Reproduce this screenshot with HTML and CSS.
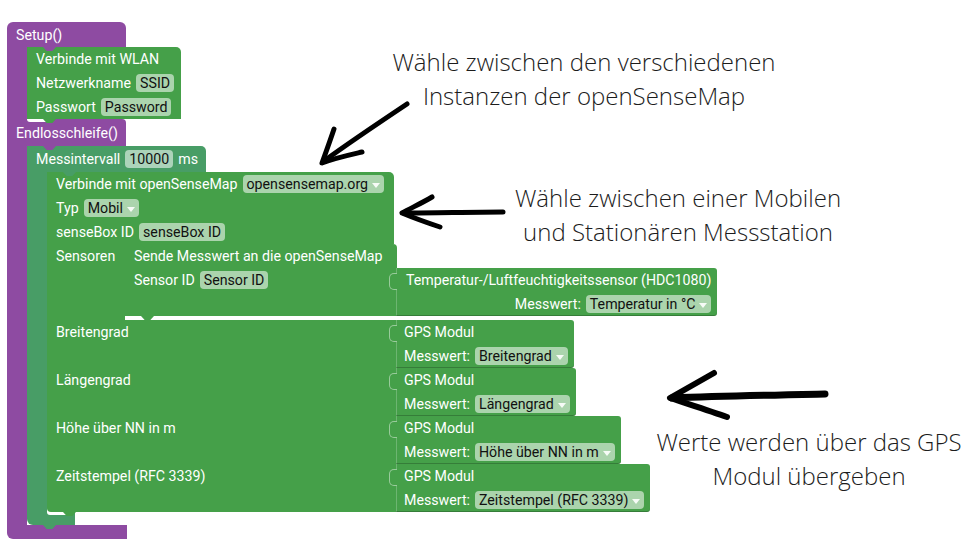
FILE: index.html
```html
<!DOCTYPE html>
<html lang="de">
<head>
<meta charset="utf-8">
<title>senseBox Blockly</title>
<link rel="stylesheet" href="styles.css">
</head>
<body>
<div class="canvas">
  <div class="program">
    <div class="c-head purple setup-head">Setup()</div>
    <div class="c-body">
      <div class="spine purple"></div>
      <div class="block green wlan notch-purple tab">
        <div class="row">Verbinde mit WLAN</div>
        <div class="row">Netzwerkname <span class="pill">SSID</span></div>
        <div class="row">Passwort <span class="pill">Password</span></div>
      </div>
    </div>
    <div class="c-head purple loop-head inner-corner">Endlosschleife()</div>
    <div class="c-body">
      <div class="spine purple"></div>
      <div class="interval">
        <div class="c-head teal interval-head notch-purple">Messintervall <span class="pill">10000</span> ms</div>
        <div class="c-body">
          <div class="spine teal"></div>
          <div class="block osm notch-teal tab">
            <div class="row green osm-row osm-top">Verbinde mit openSenseMap <span class="pill drop">opensensemap.org</span></div>
            <div class="row green osm-row">Typ <span class="pill drop">Mobil</span></div>
            <div class="row green osm-row">senseBox ID <span class="pill">senseBox ID</span></div>
            <div class="sensor-row">
              <div class="label-cell green sensor-label">Sensoren</div>
              <div class="stmt-well">
                <div class="block green send notch-green tab">
                  <div class="row">Sende Messwert an die openSenseMap</div>
                  <div class="send-value">
                    <div class="row send-label">Sensor ID <span class="pill">Sensor ID</span></div>
                    <div class="value-block green temp">
                      <div class="row title">Temperatur-/Luftfeuchtigkeitssensor (HDC1080)</div>
                      <div class="row right">Messwert: <span class="pill drop">Temperatur in °C</span></div>
                    </div>
                  </div>
                </div>
              </div>
            </div>
            <div class="input-row">
              <div class="label-cell green gps-label">Breitengrad</div>
              <div class="value-block green gps">
                <div class="row title">GPS Modul</div>
                <div class="row">Messwert: <span class="pill drop">Breitengrad</span></div>
              </div>
            </div>
            <div class="input-row">
              <div class="label-cell green gps-label">Längengrad</div>
              <div class="value-block green gps">
                <div class="row title">GPS Modul</div>
                <div class="row">Messwert: <span class="pill drop">Längengrad</span></div>
              </div>
            </div>
            <div class="input-row">
              <div class="label-cell green gps-label">Höhe über NN in m</div>
              <div class="value-block green gps">
                <div class="row title">GPS Modul</div>
                <div class="row">Messwert: <span class="pill drop">Höhe über NN in m</span></div>
              </div>
            </div>
            <div class="input-row">
              <div class="label-cell green gps-label osm-bottom">Zeitstempel (RFC 3339)</div>
              <div class="value-block green gps">
                <div class="row title">GPS Modul</div>
                <div class="row">Messwert: <span class="pill drop">Zeitstempel (RFC 3339)</span></div>
              </div>
            </div>
          </div>
        </div>
        <div class="c-foot teal interval-foot inner-corner tab-teal"></div>
      </div>
    </div>
    <div class="c-foot purple setup-foot"></div>
  </div>

  <div class="note note1">Wähle zwischen den verschiedenen<br>Instanzen der openSenseMap</div>
  <div class="note note2">Wähle zwischen einer Mobilen<br>und Stationären Messstation</div>
  <div class="note note3">Werte werden über das GPS<br>Modul übergeben</div>

  <svg class="arrows" width="967" height="553" viewBox="0 0 967 553" aria-hidden="true">
    <g fill="none" stroke="#000" stroke-linecap="round" stroke-linejoin="round">
      <path d="M407 104 C380 122 350 142 324 161" stroke-width="5"/>
      <path d="M334 129 C330 141 326 152 322 163 C335 158 349 155 362 152" stroke-width="5"/>
      <path d="M503 212 C470 212 436 213 404 213" stroke-width="5"/>
      <path d="M432 197 C422 203 411 208 402 213 C414 218 428 223 440 227" stroke-width="5"/>
      <path d="M825 394 C775 395 722 396 672 398" stroke-width="7"/>
      <path d="M714 373 C700 381 684 390 670 398 C688 404 710 411 727 417" stroke-width="6"/>
    </g>
  </svg>
</div>
</body>
</html>
```

FILE: styles.css
```css
* {
  box-sizing: border-box;
}

html,
body {
  margin: 0;
  padding: 0;
  background: #ffffff;
}

.canvas {
  position: relative;
  width: 967px;
  height: 553px;
  overflow: hidden;
  background: #ffffff;
  font-family: Roboto, "Liberation Sans", Arial, sans-serif;
  font-size: 14.2px;
  color: #ffffff;
}

/* ---------- colours ---------- */
.purple { background: #8e4ba2; }
.teal { background: #489d66; }
.green { background: #45a049; }

/* ---------- program on the workspace ---------- */
.program {
  position: absolute;
  left: 7px;
  top: 22px;
}

.row {
  height: 24px;
  display: flex;
  align-items: center;
  gap: 5px;
  padding-left: 9px;
  white-space: nowrap;
}

.c-head {
  position: relative;
  height: 24px;
  display: flex;
  align-items: center;
  gap: 5px;
  padding-left: 9px;
  white-space: nowrap;
}

.c-body {
  display: flex;
}

.spine {
  width: 20px;
  flex-shrink: 0;
}

.c-foot {
  position: relative;
}

.setup-head {
  width: 119px;
  height: 25px;
  border-radius: 6px 6px 0 0;
}

.loop-head {
  width: 119px;
  height: 27px;
  border-radius: 0 4px 0 0;
}

.setup-foot {
  width: 120px;
  height: 14px;
  border-radius: 0 0 0 6px;
}

.interval {
  display: flex;
  flex-direction: column;
}

.interval-head {
  width: 179px;
  height: 26px;
  border-radius: 0 5px 0 0;
}

.interval-foot {
  width: 48px;
  height: 13px;
  border-radius: 0 0 0 6px;
}

/* ---------- blocks ---------- */
.block {
  position: relative;
}

.wlan {
  width: 154px;
  border-radius: 0 5px 0 0;
}

.osm {
  width: 349px;
  flex-shrink: 0;
}

.osm-row {
  width: 347px;
}

.osm-top {
  border-radius: 0 5px 0 0;
}

.sensor-row {
  display: flex;
}

.label-cell {
  flex-shrink: 0;
  line-height: 24px;
  padding-left: 9px;
  white-space: nowrap;
}

.sensor-label {
  width: 78px;
  height: 76px;
}

.stmt-well {
  flex-shrink: 0;
  background: #ffffff;
  padding-bottom: 4px;
  border-radius: 0 0 0 6px;
}

.send {
  width: 272px;
  border-radius: 0 4px 0 0;
}

.send-value {
  display: flex;
  align-items: flex-start;
  height: 48px;
}

.send-label {
  width: 271px;
  flex-shrink: 0;
}

.input-row {
  display: flex;
  height: 48px;
}

.gps-label {
  width: 349px;
  height: 48px;
}

.osm-bottom {
  border-radius: 0 0 0 4px;
}

.value-block {
  position: relative;
  flex-shrink: 0;
  display: flex;
  flex-direction: column;
  padding-right: 6px;
  box-shadow: inset 0 -1px 0 rgba(0, 0, 0, 0.22), inset 1px 0 0 rgba(255, 255, 255, 0.22);
  border-radius: 0 3px 3px 0;
}

.value-block::before {
  content: "";
  position: absolute;
  left: -7px;
  top: 5px;
  width: 7px;
  height: 15px;
  border: 1px solid rgba(255, 255, 255, 0.45);
  border-right: none;
  border-radius: 5px 0 0 5px;
  background: #45a049;
}

.temp {
  height: 48px;
}

.temp .title {
  padding-left: 10px;
}

.gps {
  height: 48px;
}

.gps .row {
  padding-left: 8px;
}

.row.right {
  justify-content: flex-end;
  padding-right: 0;
}

/* ---------- fields ---------- */
.pill {
  display: inline-flex;
  align-items: center;
  height: 18px;
  padding: 0 4px;
  border-radius: 4px;
  background: rgba(255, 255, 255, 0.55);
  color: #111111;
}

.drop::after {
  content: "";
  width: 0;
  height: 0;
  margin-left: 4px;
  margin-top: 2px;
  border-left: 4px solid transparent;
  border-right: 4px solid transparent;
  border-top: 5px solid rgba(255, 255, 255, 0.9);
}

/* ---------- notches and tabs ---------- */
.notch-purple::before,
.notch-teal::before,
.notch-green::before {
  content: "";
  position: absolute;
  left: 16px;
  top: 0;
  width: 13px;
  height: 4px;
  clip-path: polygon(0 0, 100% 0, 72% 100%, 28% 100%);
  z-index: 2;
}

.notch-purple::before { background: #8e4ba2; }
.notch-teal::before { background: #489d66; }
.notch-green::before { background: #45a049; }

.tab::after {
  content: "";
  position: absolute;
  left: 16px;
  bottom: -4px;
  width: 13px;
  height: 4px;
  background: #45a049;
  clip-path: polygon(0 0, 100% 0, 72% 100%, 28% 100%);
  z-index: 3;
}

.tab-teal::after {
  content: "";
  position: absolute;
  left: 16px;
  bottom: -4px;
  width: 13px;
  height: 4px;
  background: #489d66;
  clip-path: polygon(0 0, 100% 0, 72% 100%, 28% 100%);
  z-index: 3;
}

.inner-corner::before {
  content: "";
  position: absolute;
  left: 20px;
  top: 0;
  width: 24px;
  height: 3px;
  background: #ffffff;
  border-radius: 0 0 0 4px;
}

/* ---------- annotations ---------- */
.note {
  position: absolute;
  font-family: "Open Sans", "DejaVu Sans", sans-serif;
  font-weight: 300;
  font-size: 24px;
  line-height: 34px;
  color: #1c1c1c;
  text-align: center;
  white-space: nowrap;
}

.note1 {
  left: 384px;
  top: 45px;
  width: 400px;
}

.note2 {
  left: 478px;
  top: 181px;
  width: 400px;
}

.note3 {
  left: 649px;
  top: 425px;
  width: 320px;
}

.arrows {
  position: absolute;
  left: 0;
  top: 0;
  pointer-events: none;
}
```
